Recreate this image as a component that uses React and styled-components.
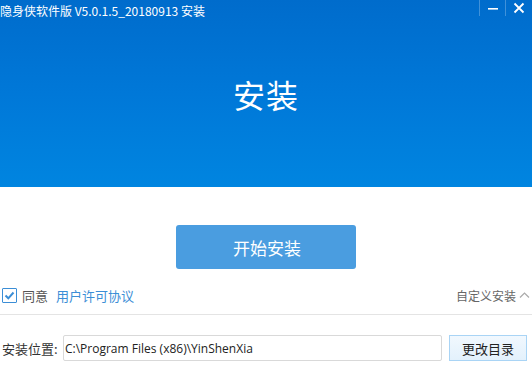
import styled, { createGlobalStyle } from 'styled-components';

const Global = createGlobalStyle`
  html, body { margin: 0; padding: 0; background: #fff; }
  body {
    font-family: "Noto Sans CJK SC", "Noto Sans", sans-serif;
    width: 532px;
    height: 373px;
    overflow: hidden;
  }
`;

const Window = styled.div`
  width: 532px;
  height: 373px;
  display: flex;
  flex-direction: column;
  overflow: hidden;
`;

const Header = styled.div`
  height: 187px;
  background: linear-gradient(180deg, #006ccc 0%, #0078d8 50%, #0085e0 100%);
  display: flex;
  flex-direction: column;
`;

const TitleBar = styled.div`
  height: 22px;
  display: flex;
  align-items: center;
  justify-content: space-between;
`;

const Title = styled.div`
  color: #fff;
  font-size: 12px;
  line-height: 22px;
  white-space: nowrap;
`;

const Controls = styled.div`
  display: flex;
  align-self: flex-start;
  height: 16px;
`;

const CtrlBtn = styled.div`
  width: ${p => p.$w}px;
  height: 16px;
  display: flex;
  align-items: center;
  justify-content: center;
  border-left: ${p => (p.$sep ? '1px solid rgba(255,255,255,0.25)' : 'none')};
  border-right: ${p => (p.$sep ? '1px solid rgba(255,255,255,0.25)' : 'none')};
`;

const Hero = styled.div`
  flex: 1;
  display: flex;
  align-items: center;
  justify-content: center;
  color: #fff;
  font-size: 32px;
  padding-bottom: 21px;
  letter-spacing: 1px;
`;

const Body = styled.div`
  flex: 1;
  display: flex;
  flex-direction: column;
`;

const StartWrap = styled.div`
  display: flex;
  justify-content: center;
  padding-top: 38px;
`;

const StartButton = styled.button`
  width: 180px;
  height: 44px;
  border: none;
  border-radius: 3px;
  background: #4a9de0;
  color: #fff;
  font-family: inherit;
  font-size: 17px;
  padding: 0 0 0 2px;
`;

const AgreeRow = styled.div`
  margin-top: 13px;
  height: 26px;
  display: flex;
  align-items: center;
  justify-content: space-between;
  padding: 0 2px 6px 2px;
  border-bottom: 1px solid #e4e4e4;
`;

const Left = styled.div`
  display: flex;
  align-items: center;
  gap: 5px;
  font-size: 13px;
`;

const Check = styled.div`
  width: 13px;
  height: 13px;
  border: 1px solid #3b8ed6;
  border-radius: 1px;
  display: flex;
  align-items: center;
  justify-content: center;
`;

const Gray = styled.span`
  color: #555;
  font-size: 13px;
`;

const Link = styled.span`
  color: #3b8ed6;
  font-size: 13px;
  margin-left: 3px;
`;

const Custom = styled.div`
  display: flex;
  align-items: center;
  gap: 3px;
  color: #666;
  font-size: 12px;
`;

const PathRow = styled.div`
  display: flex;
  align-items: center;
  padding: 0 4px 0 2px;
  margin-top: 20px;
  height: 26px;
`;

const Label = styled.span`
  color: #333;
  font-size: 13px;
  width: 61px;
  white-space: nowrap;
`;

const PathInput = styled.div`
  width: 379px;
  height: 26px;
  border: 1px solid #d9d9d9;
  border-radius: 2px;
  display: flex;
  align-items: center;
  padding-left: 1px;
  font-family: "Open Sans", "Noto Sans", sans-serif;
  font-size: 12px;
  color: #222;
  box-sizing: border-box;
`;

const Browse = styled.button`
  margin-left: 7px;
  width: 78px;
  height: 26px;
  border: 1px solid #a9d4f5;
  background: linear-gradient(180deg, #f1f8fe 0%, #e3f1fc 100%);
  font-family: inherit;
  font-size: 13px;
  color: #222;
  padding: 0;
`;

export default function App() {
  return (
    <Window>
      <Global />
      <Header>
        <TitleBar>
          <Title>隐身侠软件版 V5.0.1.5_20180913 安装</Title>
          <Controls>
            <CtrlBtn $w={25} $sep>
              <svg width="12" height="12" viewBox="0 0 12 12">
                <rect x="1" y="6" width="10" height="1.6" fill="#fff" />
              </svg>
            </CtrlBtn>
            <CtrlBtn $w={26}>
              <svg width="12" height="12" viewBox="0 0 12 12">
                <path d="M1.5 1.5 L10.5 10.5 M10.5 1.5 L1.5 10.5" stroke="#fff" strokeWidth="1.8" />
              </svg>
            </CtrlBtn>
          </Controls>
        </TitleBar>
        <Hero>安装</Hero>
      </Header>
      <Body>
        <StartWrap>
          <StartButton>开始安装</StartButton>
        </StartWrap>
        <AgreeRow>
          <Left>
            <Check>
              <svg width="11" height="11" viewBox="0 0 11 11">
                <path d="M1.5 5.5 L4.3 8.3 L9.5 2.5" stroke="#3b8ed6" strokeWidth="2" fill="none" />
              </svg>
            </Check>
            <Gray>同意</Gray>
            <Link>用户许可协议</Link>
          </Left>
          <Custom>
            自定义安装
            <svg width="11" height="8" viewBox="0 0 11 8">
              <path d="M1 6.5 L5.5 2 L10 6.5" stroke="#aaa" strokeWidth="1.2" fill="none" />
            </svg>
          </Custom>
        </AgreeRow>
        <PathRow>
          <Label>安装位置:</Label>
          <PathInput>C:\Program Files (x86)\YinShenXia</PathInput>
          <Browse>更改目录</Browse>
        </PathRow>
      </Body>
    </Window>
  );
}
